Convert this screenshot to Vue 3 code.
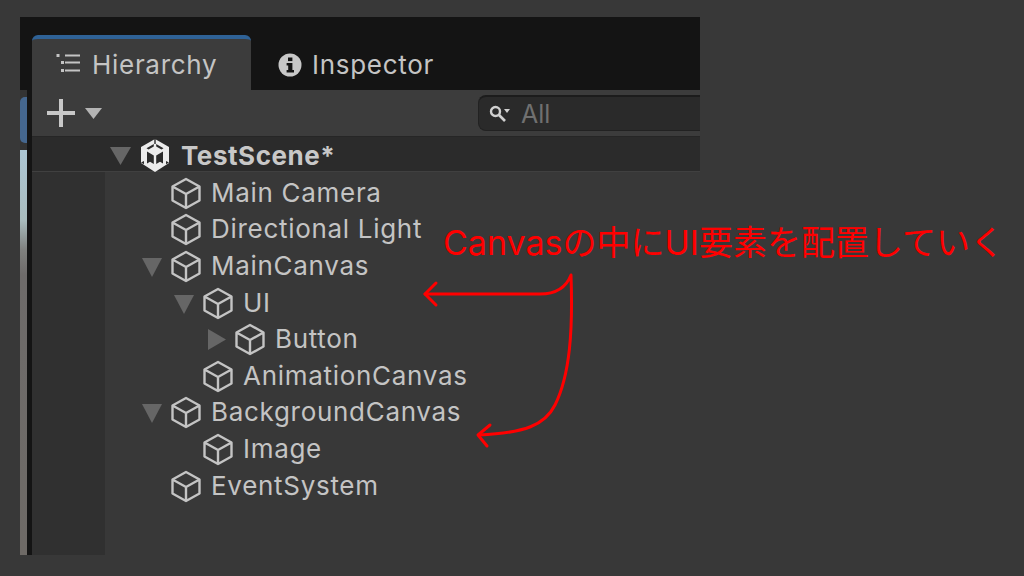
<script setup>
const rows = [
  { name: 'Main Camera', indent: 0 },
  { name: 'Directional Light', indent: 0 },
  { name: 'MainCanvas', indent: 0, arrow: 'open' },
  { name: 'UI', indent: 1, arrow: 'open' },
  { name: 'Button', indent: 2, arrow: 'closed' },
  { name: 'AnimationCanvas', indent: 1 },
  { name: 'BackgroundCanvas', indent: 0, arrow: 'open' },
  { name: 'Image', indent: 1 },
  { name: 'EventSystem', indent: 0 },
]
</script>

<template>
  <div class="page">
    <div class="window">
      <div class="strip">
        <div class="strip-top"></div>
        <div class="strip-blue"></div>
        <div class="strip-scene"></div>
      </div>
      <div class="edge"></div>
      <div class="main">
        <div class="tabbar">
          <div class="tab active">
            <svg class="tab-icon" width="26" height="26" viewBox="0 0 26 26">
              <g fill="#c4c4c4">
                <rect x="0.500" y="2" width="3" height="3" />
                <rect x="5" y="9" width="3" height="3" />
                <rect x="5" y="17" width="3" height="3" />
                <rect x="9" y="2.500" width="15" height="2" />
                <rect x="9" y="9.500" width="15" height="2" />
                <rect x="9" y="17.500" width="15" height="2" />
              </g>
            </svg>
            <span>Hierarchy</span>
          </div>
          <div class="tab">
            <svg class="tab-icon" width="24" height="24" viewBox="0 0 24 24">
              <circle cx="12" cy="12" r="11.500" fill="#c8c8c8" />
              <rect x="10" y="4.500" width="4.400" height="3.600" fill="#141414" />
              <path d="M8.600 10h5.800v7h1.600v2.400H8.600V17h1.600v-4.600H8.600z" fill="#141414" />
            </svg>
            <span>Inspector</span>
          </div>
        </div>
        <div class="toolbar">
          <div class="add">
            <svg width="28" height="28" viewBox="0 0 28 28">
              <path d="M14 0v28M0 14h28" stroke="#c8c8c8" stroke-width="4" fill="none" />
            </svg>
            <svg width="17" height="11" viewBox="0 0 17 11"><path d="M0 0h17l-8.500 11z" fill="#b4b4b4" /></svg>
          </div>
          <div class="search">
            <svg width="22" height="18" viewBox="0 0 22 18">
              <circle cx="6.500" cy="6.500" r="4.500" fill="none" stroke="#d0d0d0" stroke-width="2.400" />
              <path d="M10 10l6 6" stroke="#d0d0d0" stroke-width="2.600" fill="none" />
              <path d="M15 4h6l-3 4z" fill="#d0d0d0" />
            </svg>
            <span>All</span>
          </div>
        </div>
        <div class="scene">
          <svg class="arrow-open" width="21" height="18" viewBox="0 0 21 18"><path d="M0 0h21l-10.500 18z" fill="#666" /></svg>
          <svg class="unity" width="28" height="33" viewBox="0 0 28 33">
            <path fill="#ececec" d="M14 0l14 8v16l-14 9l-14-9V8z" />
            <path fill="#2b2b2b" d="M13.300 0h1.400v5h-1.400zM12.800 5L5.500 9.200l2 1.200l5.300-3zM15.200 5l7.300 4.200l-2 1.200l-5.300-3zM6 12.500l6.800 4v8.500L9 22.800l-3 1.700zM22 12.500l-6.800 4v8.500L19 22.800l3 1.700zM0 23.500l3-1.500v3.300zM28 23.500l-3-1.500v3.300z" />
          </svg>
          <span>TestScene*</span>
        </div>
        <div class="tree">
          <div class="gutter"></div>
          <div class="rows">
            <div v-for="row in rows" :key="row.name" class="row" :class="'indent-' + row.indent">
              <span class="arrow-slot">
                <svg v-if="row.arrow === 'open'" class="arrow-open" width="20" height="19" viewBox="0 0 20 19"><path d="M0 0h20L10 19z" fill="#666" /></svg>
                <svg v-if="row.arrow === 'closed'" class="arrow-closed" width="18" height="21" viewBox="0 0 18 21"><path d="M0 0l18 10.500L0 21z" fill="#666" /></svg>
              </span>
              <svg class="cube" width="32" height="33" viewBox="0 0 32 33">
                <path d="M16 2l13.500 7.500v14L16 31L2.500 23.500v-14zM2.500 9.500L16 17l13.500-7.500M16 17v14" fill="none" stroke="#c4c4c4" stroke-width="2.400" stroke-linejoin="round" />
              </svg>
              <span class="name">{{ row.name }}</span>
            </div>
          </div>
        </div>
      </div>
    </div>

    <div class="note">Canvasの中にUI要素を配置していく</div>
    <svg class="pointers" width="1024" height="576" viewBox="0 0 1024 576">
      <g fill="none" stroke="#f00" stroke-width="3" stroke-linecap="round" stroke-linejoin="round">
        <path d="M425 294H540C556 294 566 288 571 275C573 330 570 375 555 405C545 425 525 433 479 435" />
        <path d="M436 283L425 294L436 305" />
        <path d="M490 425L478 435L487 446" />
      </g>
    </svg>
  </div>
</template>

<style>
html, body {
  margin: 0;
  background: #383838;
}
</style>

<style scoped>
.page {
  position: relative;
  width: 1024px;
  height: 576px;
  padding: 17px 0 0 20px;
  box-sizing: border-box;
  background: #383838;
  font-family: Inter, "Noto Sans CJK JP", sans-serif;
  overflow: hidden;
}
.window {
  display: flex;
  width: 680px;
  height: 538px;
}
.strip {
  width: 7px;
  display: flex;
  flex-direction: column;
  background: #333;
}
.strip-top {
  height: 73px;
  background: #141414;
}
.strip-blue {
  height: 46px;
  margin-top: 7px;
  background: #45678f;
  border-radius: 5px 0 0 5px;
}
.strip-scene {
  flex: 1;
  margin-top: 7px;
  background: linear-gradient(#acc6d4 0, #a9bcbe 70px, #7f807e 100px, #6e6b6a 125px, #6e6a66 100%);
}
.edge {
  width: 5px;
  background: #141414;
}
.main {
  flex: 1;
  display: flex;
  flex-direction: column;
  min-width: 0;
}
.tabbar {
  height: 73px;
  flex: none;
  padding-top: 18px;
  box-sizing: border-box;
  display: flex;
  background: #141414;
}
.tab {
  display: flex;
  align-items: center;
  gap: 10px;
  padding-left: 27px;
  border-top: 4px solid transparent;
  font-size: 26px;
  letter-spacing: 0.700px;
  color: #c4c4c4;
}
.tab.active {
  width: 219px;
  padding-left: 24px;
  box-sizing: border-box;
  background: #3c3c3c;
  border-top-color: #2f6296;
  border-radius: 6px 6px 0 0;
}
.toolbar {
  height: 46px;
  flex: none;
  display: flex;
  align-items: center;
  justify-content: space-between;
  background: #3c3c3c;
}
.add {
  display: flex;
  align-items: center;
  gap: 10px;
  padding-left: 15px;
}
.search {
  width: 222px;
  height: 36px;
  box-sizing: border-box;
  display: flex;
  align-items: center;
  gap: 10px;
  padding-left: 10px;
  background: #2a2a2a;
  border: 1px solid #222;
  border-top: 2px solid #1c1c1c;
  border-right: none;
  border-radius: 8px 0 0 8px;
  font-size: 25px;
  color: #707070;
}
.scene {
  height: 36px;
  flex: none;
  display: flex;
  align-items: center;
  padding: 3px 0 0 78px;
  gap: 10px;
  background: #2b2b2b;
  border-top: 1px solid #262626;
  border-bottom: 1px solid #404040;
  box-sizing: border-box;
  font-size: 26px;
  letter-spacing: 0.550px;
  font-weight: 700;
  color: #c8c8c8;
}
.unity {
  margin-right: 2px;
}
.tree {
  flex: 1;
  display: flex;
}
.gutter {
  width: 73px;
  background: #303030;
}
.rows {
  flex: 1;
  padding-top: 2px;
}
.row {
  height: 36.600px;
  display: flex;
  align-items: center;
  font-size: 26px;
  letter-spacing: 0.700px;
  color: #c4c4c4;
}
.indent-0 { padding-left: 37px; }
.indent-1 { padding-left: 69px; }
.indent-2 { padding-left: 101px; }
.arrow-slot {
  width: 28px;
  flex: none;
  display: flex;
  align-items: center;
}
.row .arrow-open {
  margin-top: 4px;
}
.arrow-closed {
  margin: 2px 0 0 2px;
}
.cube {
  flex: none;
  margin: 2px 9px 0 0;
}
.note {
  position: absolute;
  left: 443px;
  top: 223px;
  font-size: 34px;
  line-height: 40px;
  color: #f00;
  white-space: nowrap;
}
.pointers {
  position: absolute;
  left: 0;
  top: 0;
}
</style>
